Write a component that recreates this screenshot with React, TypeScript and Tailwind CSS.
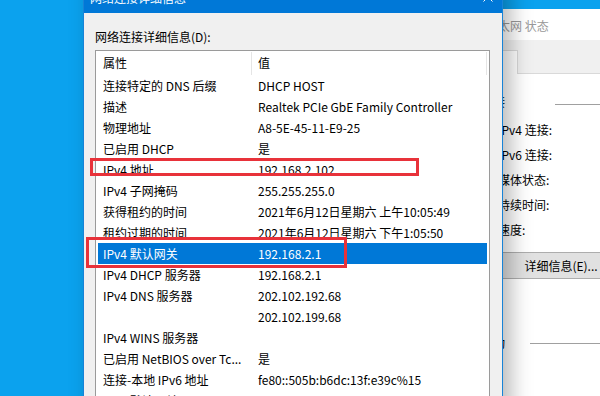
import React from 'react';

const rows: [string, string][] = [
  ['连接特定的 DNS 后缀', 'DHCP HOST'],
  ['描述', 'Realtek PCIe GbE Family Controller'],
  ['物理地址', 'A8-5E-45-11-E9-25'],
  ['已启用 DHCP', '是'],
  ['IPv4 地址', '192.168.2.102'],
  ['IPv4 子网掩码', '255.255.255.0'],
  ['获得租约的时间', '2021年6月12日星期六 上午10:05:49'],
  ['租约过期的时间', '2021年6月12日星期六 下午1:05:50'],
  ['IPv4 默认网关', '192.168.2.1'],
  ['IPv4 DHCP 服务器', '192.168.2.1'],
  ['IPv4 DNS 服务器', '202.102.192.68'],
  ['', '202.102.199.68'],
  ['IPv4 WINS 服务器', ''],
  ['已启用 NetBIOS over Tc...', '是'],
  ['连接-本地 IPv6 地址', 'fe80::505b:b6dc:13f:e39c%15'],
  ['IPv6 默认网关', ''],
];

const SELECTED = 8;

const StatusWindow: React.FC = () => (
  <div className="absolute left-[456px] top-[9px] flex h-[400px] w-[220px] flex-col bg-[#f0f0f0]">
    {/* Title bar - inactive */}
    <div className="flex h-[31px] shrink-0 items-center bg-white pl-[30px] pt-[3px] text-[12px] text-[#999999]">
      以太网 状态
    </div>

    {/* Tabs */}
    <div className="mt-[10px] flex h-[24px] shrink-0">
      <div className="ml-[10px] w-[52px] border-l border-r border-t border-[#d9d9d9] bg-white" />
      <div className="flex-1 border-b border-[#d9d9d9]" />
    </div>

    {/* Tab panel */}
    <div className="ml-[10px] flex flex-1 flex-col border-b border-l border-r border-[#d9d9d9] bg-white">
      <div className="mt-[20px] flex h-[16px] items-center pl-[14px]">
        <span className="leading-[16px]">连接</span>
        <div className="ml-[50px] mt-[4px] h-px flex-1 bg-[#a0a0a0]" />
      </div>
      <div className="mt-[7px] flex flex-col pl-[31px]">
        {['IPv4 连接:', 'IPv6 连接:', '媒体状态:', '持续时间:', '速度:'].map((label) => (
          <div key={label} className="h-[25px] leading-[25px]">
            {label}
          </div>
        ))}
      </div>
      <div className="ml-[3px] mt-[10px] flex h-[27px] w-[182px] items-center justify-center border border-[#adadad] bg-[#e1e1e1]">
        详细信息(E)...
      </div>
      <div className="mt-[56px] flex h-[16px] items-center pl-[14px]">
        <span className="leading-[16px]">活动</span>
        <div className="ml-[25px] h-px flex-1 bg-[#a0a0a0]" />
      </div>
    </div>
  </div>
);

const DetailsDialog: React.FC = () => (
  <div className="absolute left-[83px] top-[-18px] z-10 flex h-[440px] w-[420px] flex-col border border-[#1883d7] bg-[#f0f0f0] shadow-[8px_0_20px_rgba(0,0,0,0.28)]">
    {/* Title bar */}
    <div className="flex h-[30px] shrink-0 items-center justify-between bg-[#0078d7] pl-[6px] pr-[9px] text-[12px] text-white">
      <span>网络连接详细信息</span>
      <svg width="10" height="10" viewBox="0 0 10 10" className="mt-[-2px]">
        <path d="M0.5 0.5 L9.5 9.5 M9.5 0.5 L0.5 9.5" stroke="white" strokeWidth="1" />
      </svg>
    </div>

    <div className="flex flex-1 flex-col pl-[11px] pr-[12px] pt-[16px]">
      <div className="text-[12px] leading-[16px] text-black">网络连接详细信息(D):</div>

      <div className="mt-[5px] flex-1 border border-[#9a9a9a] bg-white px-[2px]">
        {/* Header */}
        <div className="flex h-[24px] items-center">
          <div className="w-[153px] pl-[5px]">属性</div>
          <div className="h-[23px] w-px bg-[#e5e5e5]" />
          <div className="flex-1 pl-[6px]">值</div>
          <div className="h-[23px] w-px bg-[#e5e5e5]" />
        </div>

        {rows.map(([name, value], i) => (
          <div
            key={i}
            className={`flex h-[21px] items-center whitespace-nowrap ${
              i === SELECTED ? 'bg-[#0078d7] text-white' : 'text-black'
            }`}
          >
            <div className="w-[154px] pl-[5px]">{name}</div>
            <div className="flex-1 pl-[6px]">{value}</div>
          </div>
        ))}
      </div>
    </div>
  </div>
);

export default function App() {
  return (
    <div className="relative h-[396px] w-[600px] overflow-hidden bg-[#0ba2ee] font-['Noto_Sans_CJK_SC','Noto_Sans',sans-serif] text-[12px] text-black">
      <StatusWindow />
      <DetailsDialog />

      {/* Red annotation boxes */}
      <div className="absolute left-[90px] top-[158px] z-20 h-[18px] w-[329px] border-[3px] border-[#e8323a]" />
      <div className="absolute left-[86px] top-[237px] z-20 h-[31px] w-[261px] border-[3px] border-[#e8323a]" />
    </div>
  );
}
